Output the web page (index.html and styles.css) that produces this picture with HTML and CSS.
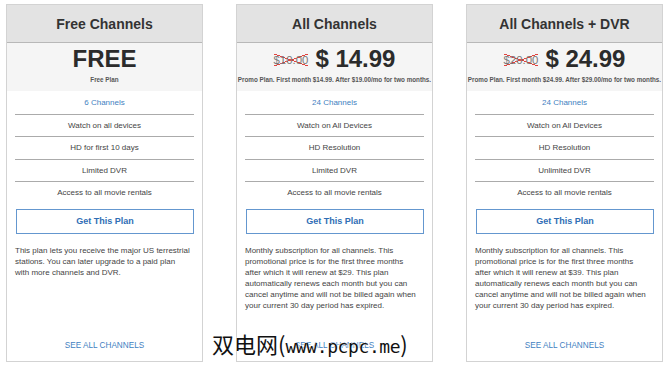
FILE: index.html
```html
<!DOCTYPE html>
<html lang="en">
<head>
<meta charset="utf-8">
<title>Plans</title>
<link rel="stylesheet" href="styles.css">
</head>
<body>
<div class="plans">
  <div class="card">
    <div class="card-head">Free Channels</div>
    <div class="price">
      <div class="price-line"><span class="amount">FREE</span></div>
      <div class="price-note">Free Plan</div>
    </div>
    <ul class="features">
      <li class="channels">6 Channels</li>
      <li>Watch on all devices</li>
      <li>HD for first 10 days</li>
      <li>Limited DVR</li>
      <li>Access to all movie rentals</li>
    </ul>
    <a class="btn">Get This Plan</a>
    <p class="desc">This plan lets you receive the major US terrestrial stations. You can later upgrade to a paid plan with more channels and DVR.</p>
    <a class="see-all">SEE ALL CHANNELS</a>
  </div>

  <div class="card">
    <div class="card-head">All Channels</div>
    <div class="price">
      <div class="price-line"><span class="old">$10.00</span><span class="amount">$ 14.99</span></div>
      <div class="price-note">Promo Plan. First month $14.99. After $19.00/mo for two months.</div>
    </div>
    <ul class="features">
      <li class="channels">24 Channels</li>
      <li>Watch on All Devices</li>
      <li>HD Resolution</li>
      <li>Limited DVR</li>
      <li>Access to all movie rentals</li>
    </ul>
    <a class="btn">Get This Plan</a>
    <p class="desc">Monthly subscription for all channels. This promotional price is for the first three months after which it will renew at $29. This plan automatically renews each month but you can cancel anytime and will not be billed again when your current 30 day period has expired.</p>
    <a class="see-all">SEE ALL CHANNELS</a>
  </div>

  <div class="card">
    <div class="card-head">All Channels + DVR</div>
    <div class="price">
      <div class="price-line"><span class="old">$20.00</span><span class="amount">$ 24.99</span></div>
      <div class="price-note">Promo Plan. First month $24.99. After $29.00/mo for two months.</div>
    </div>
    <ul class="features">
      <li class="channels">24 Channels</li>
      <li>Watch on All Devices</li>
      <li>HD Resolution</li>
      <li>Unlimited DVR</li>
      <li>Access to all movie rentals</li>
    </ul>
    <a class="btn">Get This Plan</a>
    <p class="desc">Monthly subscription for all channels. This promotional price is for the first three months after which it will renew at $39. This plan automatically renews each month but you can cancel anytime and will not be billed again when your current 30 day period has expired.</p>
    <a class="see-all">SEE ALL CHANNELS</a>
  </div>
</div>
<div class="watermark">双电网(<span class="wm-latin">www.pcpc.me</span>)</div>
</body>
</html>
```

FILE: styles.css
```css
* { box-sizing: border-box; }

body {
  margin: 0;
  background: #ffffff;
  font-family: "Liberation Sans", Arial, sans-serif;
  color: #444444;
}

.plans {
  display: flex;
  gap: 33px;
  padding: 4px 0 0 6px;
}

.card {
  width: 197px;
  height: 358px;
  border: 1px solid #d3d3d3;
  display: flex;
  flex-direction: column;
}

.card-head {
  height: 38px;
  line-height: 38px;
  background: #e3e3e3;
  border-bottom: 1px solid #b8b8b8;
  text-align: center;
  font-size: 14px;
  font-weight: bold;
  color: #333333;
}

.price {
  background: #f5f5f5;
  padding: 3px 0 6px;
  text-align: center;
  height: 48px;
}

.price-line {
  height: 26px;
  line-height: 26px;
  white-space: nowrap;
}

.amount {
  font-size: 24px;
  font-weight: bold;
  color: #2b2b2b;
}

.old {
  display: inline-block;
  font-size: 11.4px;
  line-height: 12px;
  color: #7a7a7a;
  margin-right: 7px;
  vertical-align: 3px;
  background:
    linear-gradient(to top right, transparent calc(50% - 0.5px), #e0433f calc(50% - 0.5px), #e0433f calc(50% + 0.5px), transparent calc(50% + 0.5px)),
    linear-gradient(to bottom right, transparent calc(50% - 0.5px), #e0433f calc(50% - 0.5px), #e0433f calc(50% + 0.5px), transparent calc(50% + 0.5px));
}

.price-note {
  margin-top: 3px;
  line-height: 10px;
  font-size: 6.3px;
  font-weight: bold;
  color: #555555;
  white-space: nowrap;
}

.features {
  list-style: none;
  margin: 0 8px;
  padding: 0;
}

.features li {
  line-height: 22px;
  border-bottom: 1px solid #ababab;
  text-align: center;
  font-size: 8px;
  color: #444444;
}

.features li:first-child { padding-top: 1px; }

.features li:nth-child(2),
.features li:nth-child(4) { line-height: 21px; }

.features li:last-child { border-bottom: none; }

.features .channels { color: #3f7fc1; }

.btn {
  display: block;
  margin: 5px 8px 0 9px;
  height: 25px;
  border: 1px solid #6497cf;
  line-height: 23px;
  text-align: center;
  font-size: 9px;
  font-weight: bold;
  color: #2f6eb5;
}

.desc {
  margin: 11px 11px 0 8px;
  font-size: 8px;
  line-height: 11px;
  color: #444444;
}

.see-all {
  display: block;
  margin-top: auto;
  padding-bottom: 10px;
  line-height: 11px;
  text-align: center;
  font-size: 8.2px;
  color: #3f7fc1;
}

.watermark {
  position: absolute;
  left: 212px;
  top: 331px;
  font-family: "Noto Sans CJK SC", sans-serif;
  font-size: 22px;
  line-height: 24px;
  color: #111111;
  white-space: nowrap;
  text-shadow: 0 0 2px #ffffff, 0 0 2px #ffffff;
}

.wm-latin {
  font-family: "DejaVu Sans Mono", monospace;
  font-size: 18px;
  letter-spacing: -0.4px;
}
```
